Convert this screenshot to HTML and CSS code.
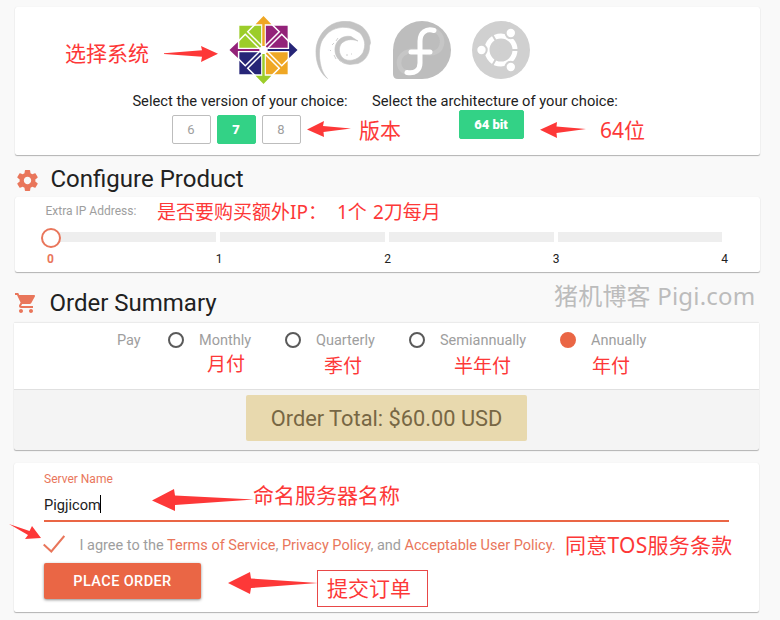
FILE: index.html
```html
<!DOCTYPE html>
<html lang="zh-CN">
<head>
<meta charset="utf-8">
<title>Configure Product</title>
<link rel="stylesheet" href="styles.css">
</head>
<body>
<main class="page">
  <section class="card system">
    <div class="logos">
      <svg class="centos" viewBox="-35 -35 70 70">
        <path fill="#9ccd2a" d="M-24.5-24.5H0V0H-24.5zM-8 26H8L0 34.5z"/>
        <path fill="#932279" d="M0-24.5H24.5V0H0zM-26-8V8L-34.5 0z"/>
        <path fill="#262577" d="M-24.5 0H0V24.5H-24.5zM26-8V8L34.5 0z"/>
        <path fill="#efa724" d="M0 0H24.5V24.5H0zM-8-26H8L0-34.5z"/>
        <path fill="none" stroke="#fff" stroke-width="1.500" d="M-8.500-26L-16-18.500 0-2.500 16-18.500 8.500-26M-8.500 26L-16 18.500 0 2.500 16 18.500 8.500 26M-26-8.500L-18.500-16-2.500 0-18.500 16-26 8.500M26-8.500L18.500-16 2.500 0 18.500 16 26 8.500"/>
        <path stroke="#fff" stroke-width="4.800" d="M0-25V25M-25 0H25"/>
        <path stroke="#efa724" stroke-width="2.500" d="M0-27V-4"/>
        <path stroke="#262577" stroke-width="2" d="M4 0H27"/>
        <path stroke="#9ccd2a" stroke-width="2.500" d="M0 4V27"/>
        <path stroke="#932279" stroke-width="2" d="M-27 0H-4"/>
        <circle r="4" fill="#fff"/>
      </svg>
      <svg class="debian" viewBox="0 0 58 58">
        <path fill="#c3c3c3" stroke="#c3c3c3" stroke-width=".6" d="M12.500 57.500C5 52 .5 42 1 29 2 15 12 2 27 .5 33-.5 38 1 42 3 50 6 55 14 55.500 22L54.500 25C55 33 50 40 43 42.500L35 43.500C26 43 19 36 20 27 21 19 28 14 36 15.500L43 20C36 17.500 30 18.500 26 23 23 28 24 35 30 38.500 37 41 44 38 48 31.500 51 24 50 18 45 12L39 8.500C29 4 18 7 12 13L8 18C4 24 4 34 5 40 6 47 8 53 12.500 57.500z"/>
        <path fill="none" stroke="#d0d0d0" d="M17 24l2-2M16 29l-1 1M21 20l2-3M19 34l2 4M24 39l5 3M31 34h2M36 33h1"/>
      </svg>
      <svg class="fedora" viewBox="0 0 58 58">
        <path fill="#bdbdbd" d="M29 0A29 29 0 0 1 29 58H5Q0 58 0 53V29A29 29 0 0 1 29 0z"/>
        <path fill="none" stroke="#c6c6c6" stroke-width="4.500" d="M43 10C50 14 51 23 46 29 41 34 33 32 30 31M26 31C18 28 10 31 7 37 4 44 8 50 13 51"/>
        <path fill="none" stroke="#fff" stroke-width="5" stroke-linecap="round" d="M41 9.500C33 7 27 12 27 20V42C27 49 22 53 14 51.500M18 31H37"/>
      </svg>
      <svg class="ubuntu" viewBox="0 0 58 58">
        <circle cx="29" cy="29" r="29" fill="#d0d0d0"/>
        <circle cx="29" cy="29" r="14" fill="none" stroke="#fff" stroke-width="5"/>
        <path stroke="#d0d0d0" stroke-width="2" d="M31 29H48M28 27L19.500 12.300M28 31L19.500 45.700"/>
        <g fill="#fff" stroke="#d0d0d0" stroke-width="2">
          <circle cx="9.500" cy="29" r="5.200"/><circle cx="38.800" cy="12" r="5.200"/><circle cx="38.800" cy="46" r="5.200"/>
        </g>
      </svg>
    </div>
    <div class="choices">
      <div class="choice version">
        <div class="label">Select the version of your choice:</div>
        <div class="options"><span class="option">6</span><span class="option on">7</span><span class="option">8</span></div>
      </div>
      <div class="choice arch">
        <div class="label">Select the architecture of your choice:</div>
        <div class="options"><span class="option on wide">64 bit</span></div>
      </div>
    </div>
  </section>

  <h2 class="title configure">
    <svg class="gear" viewBox="2 2 20 20"><path fill="#e9765b" d="M19.430 12.980c.04-.32.07-.64.07-.98s-.03-.66-.07-.98l2.110-1.650c.19-.15.24-.42.12-.64l-2-3.460c-.12-.22-.39-.3-.61-.22l-2.490 1c-.52-.4-1.080-.73-1.690-.98l-.38-2.650C14.460 2.180 14.250 2 14 2h-4c-.25 0-.46.18-.49.42l-.38 2.650c-.61.25-1.170.59-1.690.98l-2.490-1c-.23-.09-.49 0-.61.22l-2 3.460c-.13.22-.07.49.12.64l2.110 1.650c-.04.32-.07.65-.07.98s.03.66.07.98l-2.110 1.650c-.19.15-.24.42-.12.64l2 3.460c.12.22.39.3.61.22l2.490-1c.52.4 1.080.73 1.690.98l.38 2.650c.03.24.24.42.49.42h4c.25 0 .46-.18.49-.42l.38-2.650c.61-.25 1.170-.59 1.690-.98l2.490 1c.23.09.49 0 .61-.22l2-3.460c.12-.22.07-.49-.12-.64l-2.110-1.650zM12 15.500c-1.930 0-3.500-1.570-3.500-3.500s1.570-3.500 3.500-3.500 3.500 1.570 3.500 3.500-1.570 3.500-3.500 3.500z"/></svg>
    <span>Configure Product</span>
  </h2>
  <section class="card ip">
    <div class="ip-label">Extra IP Address:</div>
    <div class="slider"><i></i><i></i><i></i><i></i><b class="knob"></b></div>
    <div class="ticks"><span class="current">0</span><span>1</span><span>2</span><span>3</span><span>4</span></div>
  </section>

  <h2 class="title summary">
    <svg class="cart" viewBox="1 2 21 20"><path fill="#e9765b" d="M7 18c-1.100 0-1.990.9-1.990 2S5.900 22 7 22s2-.9 2-2-.9-2-2-2zM1 2v2h2l3.600 7.590-1.350 2.450c-.16.28-.25.61-.25.96 0 1.100.9 2 2 2h12v-2H7.420c-.14 0-.25-.11-.25-.25l.03-.12.9-1.630h7.450c.75 0 1.410-.41 1.750-1.030l3.580-6.490c.08-.14.12-.31.12-.48 0-.55-.45-1-1-1H5.210l-.94-2H1zm16 16c-1.100 0-1.990.9-1.990 2s.89 2 1.990 2 2-.9 2-2-.9-2-2-2z"/></svg>
    <span>Order Summary</span>
  </h2>
  <section class="card order">
    <div class="periods">
      <span class="pay">Pay</span>
      <span class="period monthly"><i class="radio"></i>Monthly</span>
      <span class="period quarterly"><i class="radio"></i>Quarterly</span>
      <span class="period semi"><i class="radio"></i>Semiannually</span>
      <span class="period annually"><i class="radio on"></i>Annually</span>
    </div>
    <div class="total-row"><div class="total">Order Total: $60.00 USD</div></div>
  </section>

  <section class="card server">
    <div class="server-label">Server Name</div>
    <div class="field"><span>Pigjicom</span><i class="caret"></i></div>
    <div class="agree">
      <svg class="check" viewBox="0 0 22 18"><path fill="none" stroke="#e9765b" stroke-width="2" d="M.7 9.500L8.300 16.500 21.300 1"/></svg>
      <span>I agree to the <a>Terms of Service</a>, <a>Privacy Policy</a>, and <a>Acceptable User Policy.</a></span>
    </div>
    <div class="submit">PLACE ORDER</div>
  </section>

  <div class="notes">
    <svg class="arrows" viewBox="0 0 780 620">
      <g fill="#fd3838">
        <path d="M164 53.200L202 50.300 201 46 218 53.700 201 62 202 56.800 164 54z"/>
        <path d="M307 129.500L324 121 323 126 351 128.500 323.500 132 324 137z"/>
        <path d="M540 129.700L557 122 556.500 126.500 586 129 556.500 133 557 138z"/>
        <path d="M152 500.500L174 489 175 495.500 254 499.500 175 505 175 511z"/>
        <path d="M9 524L29.500 531 32 526 41 538 25 539 28 535z"/>
        <path d="M228 583L250 572 251 578.500 318 583 251 588 250 594z"/>
      </g>
    </svg>
    <span class="note n-system">选择系统</span>
    <span class="note n-version">版本</span>
    <span class="note n-bits">64位</span>
    <span class="note small n-ip">是否要购买额外IP：</span>
    <span class="note small n-one">1个</span>
    <span class="note small n-two">2刀每月</span>
    <span class="note small n-month">月付</span>
    <span class="note small n-quarter">季付</span>
    <span class="note small n-half">半年付</span>
    <span class="note small n-year">年付</span>
    <span class="note n-name">命名服务器名称</span>
    <span class="note n-tos">同意TOS服务条款</span>
    <span class="note n-submit">提交订单</span>
    <span class="note watermark">猪机博客 Pigi.com</span>
  </div>
</main>
</body>
</html>
```
FILE: styles.css
```css
* { box-sizing: border-box; }
body { margin: 0; background: #f9f9f9; font-family: Roboto, "Liberation Sans", sans-serif; color: #212121; }
.page { position: relative; width: 780px; height: 620px; padding: 7px 20px 0 15px; overflow: hidden; }
.card { width: 745px; background: #fff; border-radius: 2px; box-shadow: 0 1px 1px rgba(0,0,0,.28), 0 0 1px rgba(0,0,0,.1); }

.system { height: 148px; }
.logos { display: flex; align-items: center; height: 86px; padding-left: 214px; }
.logos svg { flex: none; width: 58px; height: 58px; }
.logos .centos { width: 69px; height: 70px; margin-right: 17px; }
.logos .debian { margin-right: 20px; }
.logos .fedora { margin-right: 21px; }
.choices { display: flex; gap: 24px; padding-left: 117px; }
.choice { display: flex; flex-direction: column; align-items: center; }
.version { width: 216px; }
.arch { width: 246px; }
.label { height: 16px; font-size: 14.700px; line-height: 17px; white-space: nowrap; }
.options { display: flex; gap: 6px; margin-top: 6px; padding-right: 8px; }
.arch .options { margin-top: 1px; }
.option { width: 39px; height: 29px; border: 1px solid #bdbdbd; border-radius: 2px; color: #9e9e9e; font-size: 13px; line-height: 27px; text-align: center; }
.option.on { border-color: #33d286; background: #33d286; color: #fff; font-weight: 900; }
.option.wide { width: 65px; }

.title { display: flex; align-items: center; height: 42px; margin: 0; font-size: 24px; font-weight: 400; line-height: 30px; }
.configure { padding: 6px 0 0 2px; }
.configure span, .summary span { margin-left: -.5px; }
.gear { width: 21px; height: 21px; margin: 3px 13px 0 0; }
.ip { height: 75px; padding: 6px 30px 0; }
.ip-label { height: 16px; padding-left: .5px; color: #9e9e9e; font-size: 12px; line-height: 16px; }
.slider { position: relative; display: grid; grid-template-columns: 166px 165px 165px 164px; gap: 4px; width: 672px; height: 10px; margin: 13px 0 0 5px; }
.slider i { background: #eee; }
.knob { position: absolute; left: -9px; top: -4px; width: 20px; height: 20px; border: 2px solid #e9765b; border-radius: 50%; background: #fff; }
.ticks { display: flex; justify-content: space-between; width: 684px; margin: 10px 0 0 .5px; font-size: 12px; line-height: 14px; }
.ticks span { width: 10px; text-align: center; }
.ticks .current { color: #e9765b; font-weight: 700; }

.summary { height: 50px; padding-top: 11px; }
.cart { width: 21px; height: 20px; margin-right: 14px; }
.order { height: 128px; margin-left: -1px; background: #f4f4f4; border-top: 1px solid #ebebeb; }
.periods { display: flex; align-items: flex-start; height: 67px; padding: 9px 0 0 103px; border-bottom: 1px solid #e0e0e0; background: #fff; color: #9e9e9e; font-size: 14.500px; line-height: 17px; }
.pay { width: 51px; }
.period { display: flex; align-items: flex-start; }
.monthly { width: 117px; }
.quarterly { width: 124px; }
.semi { width: 151px; }
.radio { flex: none; width: 16px; height: 16px; margin-right: 15px; border: 2px solid #5a5a5a; border-radius: 50%; }
.radio.on { border-color: #ea6645; background: #ea6645; }
.total-row { padding: 5px 0 0 232px; }
.total { width: 281px; height: 46px; border-radius: 2px; background: #e8d9ae; color: #776744; font-size: 21.800px; line-height: 47px; text-align: center; }

.server { height: 149px; margin: 13px 0 0 -1px; padding: 9px 30px 0; }
.server-label { height: 14px; color: #e9765b; font-size: 12px; line-height: 14px; }
.field { display: flex; align-items: center; height: 36px; padding-top: 4px; border-bottom: 2px solid #ea6645; font-size: 14.600px; }
.caret { width: 1px; height: 18px; margin: -2px 0 0 -1px; background: #000; }
.agree { display: flex; align-items: center; height: 41px; color: #9e9e9e; font-size: 14.500px; white-space: nowrap; padding-top: 5px; }
.agree span { margin-left: .5px; }
.agree a { color: #e9765b; }
.check { width: 22px; height: 18px; margin: -2px 14px 0 -1px; }
.submit { width: 157px; height: 36px; border-radius: 2px; background: #ea6645; box-shadow: 0 1px 3px rgba(0,0,0,.45); color: #fff; font-size: 14.500px; font-weight: 500; letter-spacing: .4px; line-height: 37px; text-align: center; }

.notes { position: absolute; inset: 0; }
.arrows { position: absolute; left: 0; top: 0; width: 780px; height: 620px; }
.note { position: absolute; color: #fd3838; font-family: "Noto Sans", "Noto Sans CJK SC", sans-serif; font-size: 21px; font-weight: 400; line-height: 30px; white-space: nowrap; }
.small { font-size: 19px; }
.n-system { left: 65px; top: 38px; }
.n-version { left: 359px; top: 115px; }
.n-bits { left: 600px; top: 115px; }
.n-ip { left: 157px; top: 197px; }
.n-one { left: 337px; top: 197px; }
.n-two { left: 373px; top: 197px; }
.n-month { left: 207px; top: 349px; }
.n-quarter { left: 324px; top: 351px; }
.n-half { left: 454px; top: 351px; }
.n-year { left: 592px; top: 351px; }
.n-name { left: 253px; top: 480px; }
.n-tos { left: 565px; top: 530px; letter-spacing: .25px; }
.n-submit { left: 317px; top: 570px; width: 111px; height: 37px; padding-left: 9px; border: 1px solid #e84747; line-height: 34px; }
.watermark { left: 554px; top: 281px; color: #bcbcbc; font-size: 24px; letter-spacing: .2px; }
```
